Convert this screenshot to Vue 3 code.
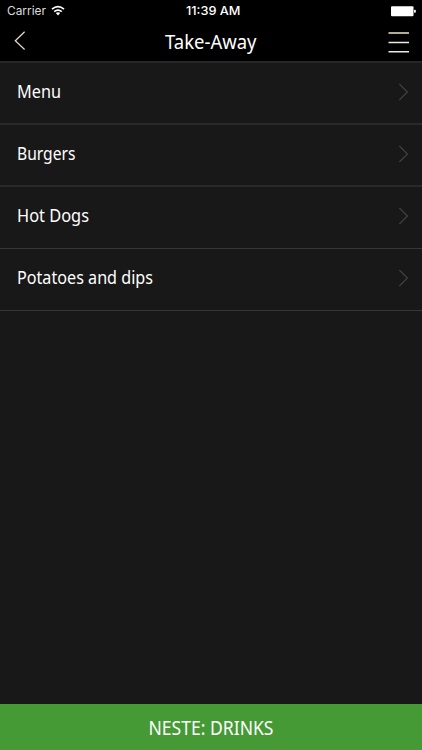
<script setup>
const items = [
  { label: 'Menu', width: 44 },
  { label: 'Burgers', width: 58.5 },
  { label: 'Hot Dogs', width: 72 },
  { label: 'Potatoes and dips', width: 136 },
]
</script>

<template>
  <div class="screen">
    <header class="header">
      <div class="status">
        <div class="carrier">
          <svg class="carrier-text" width="40" height="22"><text x="0" y="15" textLength="39" lengthAdjust="spacingAndGlyphs">Carrier</text></svg>
          <svg class="wifi" width="14" height="12" viewBox="0 0 14 12" fill="none" stroke="#fff" stroke-width="1.7">
            <path d="M1 4.2Q7-.9 13 4.2M3.2 6.7Q7 3.4 10.8 6.7" />
            <path d="M4.8 8.1Q7 6.5 9.2 8.1L7 10.5Z" fill="#fff" stroke="none" />
          </svg>
        </div>
        <svg class="time" width="56" height="22"><text x="0" y="15.3" textLength="54.5" lengthAdjust="spacingAndGlyphs">11:39 AM</text></svg>
        <svg class="battery" width="26" height="11" viewBox="0 0 26 11" fill="#fff">
          <rect x="0" y="0.3" width="22.5" height="10" rx="1" />
          <rect x="23" y="3.8" width="1.8" height="3" rx=".7" />
        </svg>
      </div>
      <div class="nav">
        <svg class="back" width="14" height="20" viewBox="0 0 14 20" fill="none" stroke="#e2d9c6" stroke-width="1.25"><path d="M10.6 .8L1.3 9.8L10.6 18.5" /></svg>
        <svg class="title" width="94" height="34"><text x="0" y="24" textLength="91.5" lengthAdjust="spacingAndGlyphs">Take-Away</text></svg>
        <svg class="burger" width="22" height="23" viewBox="0 0 22 23">
          <path d="M.5 3H21" stroke="#c9bfaa" stroke-width="1.8" />
          <path d="M.5 12.4H21M.5 21.7H21" stroke="#eee9e0" stroke-width="1.5" />
        </svg>
      </div>
    </header>
    <main class="list">
      <div v-for="item in items" :key="item.label" class="row">
        <svg class="label" width="180" height="30"><text x="0" y="20.6" :textLength="item.width" lengthAdjust="spacingAndGlyphs">{{ item.label }}</text></svg>
        <svg width="10" height="18" viewBox="0 0 10 18" fill="none" stroke="#424242" stroke-width="1.1"><path d="M.4 1L8.4 9L.4 17" /></svg>
      </div>
    </main>
    <footer class="next"><svg width="134" height="38"><text x="4.5" y="26.5" textLength="125" lengthAdjust="spacingAndGlyphs">NESTE: DRINKS</text></svg></footer>
  </div>
</template>

<style>
body { margin: 0; background: #181818; }
</style>
<style scoped>
.screen { width: 422px; height: 750px; display: flex; flex-direction: column; background: #181818; overflow: hidden; font-family: "Noto Sans", sans-serif; }
svg { display: block; flex-shrink: 0; overflow: visible; }
text { fill: #fff; }
.header { height: 61px; background: #000; flex-shrink: 0; }
.status { height: 22px; display: grid; grid-template-columns: 1fr 56px 1fr; align-items: center; font-family: Inter, sans-serif; font-size: 12px; }
.carrier { display: flex; align-items: center; padding-left: 7px; gap: 4px; }
.carrier-text text { fill: #ddd; }
.time { font-weight: 500; margin-left: 3px; }
.battery { justify-self: end; margin-right: 5px; }
.nav { height: 39px; display: grid; grid-template-columns: 1fr 94px 1fr; align-items: center; padding: 0 12px 0 14px; }
.title { font-size: 19.8px; }
.back { margin-bottom: 2px; }
.burger { justify-self: end; }
.list { flex: 1; border-top: 2px solid #262626; }
.row { height: 62px; box-sizing: border-box; border-bottom: 2px solid #292929; display: flex; align-items: center; justify-content: space-between; padding: 0 13px 2px 16.5px; }
.row:nth-child(n+3) { border-bottom: 1px solid #363636; padding-bottom: 4px; }
.label { font-size: 17.4px; }
.next { height: 46px; background: #459a35; display: flex; align-items: center; justify-content: center; font-size: 19.5px; flex-shrink: 0; }
</style>
